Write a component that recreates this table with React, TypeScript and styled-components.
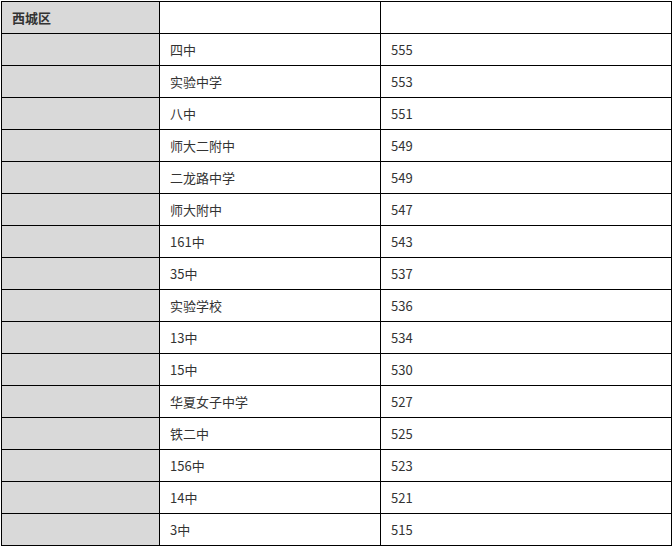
import React from 'react';
import styled, { createGlobalStyle } from 'styled-components';

/** Página limpa, sem margem do navegador. */
const GlobalStyle = createGlobalStyle`
  body {
    margin: 0;
    background: #ffffff;
    font-family: "Microsoft YaHei", "Noto Sans CJK SC", "Noto Sans", sans-serif;
  }
`;

const rows: Array<[string, string]> = [
  ['四中', '555'],
  ['实验中学', '553'],
  ['八中', '551'],
  ['师大二附中', '549'],
  ['二龙路中学', '549'],
  ['师大附中', '547'],
  ['161中', '543'],
  ['35中', '537'],
  ['实验学校', '536'],
  ['13中', '534'],
  ['15中', '530'],
  ['华夏女子中学', '527'],
  ['铁二中', '525'],
  ['156中', '523'],
  ['14中', '521'],
  ['3中', '515'],
];

const Wrap = styled.div`
  padding: 1px 0 0 1px;
`;

const Table = styled.table`
  border-collapse: collapse;
  table-layout: fixed;
  width: 670px;
  color: #333333;
  font-size: 13px;
`;

const Cell = styled.td<{ $shaded?: boolean; $bold?: boolean }>`
  height: 31px;
  padding: 0 0 0 10px;
  border: 1px solid #000000;
  background: ${({ $shaded }) => ($shaded ? '#d9d9d9' : '#ffffff')};
  font-weight: ${({ $bold }) => ($bold ? 700 : 400)};
  vertical-align: middle;
  white-space: nowrap;
`;

export default function App() {
  return (
    <>
      <GlobalStyle />
      <Wrap>
        <Table>
          <colgroup>
            <col style={{ width: 158 }} />
            <col style={{ width: 221 }} />
            <col style={{ width: 291 }} />
          </colgroup>
          <tbody>
            <tr>
              <Cell $shaded $bold>西城区</Cell>
              <Cell />
              <Cell />
            </tr>
            {rows.map(([school, score]) => (
              <tr key={school + score}>
                <Cell $shaded />
                <Cell>{school}</Cell>
                <Cell>{score}</Cell>
              </tr>
            ))}
          </tbody>
        </Table>
      </Wrap>
    </>
  );
}
